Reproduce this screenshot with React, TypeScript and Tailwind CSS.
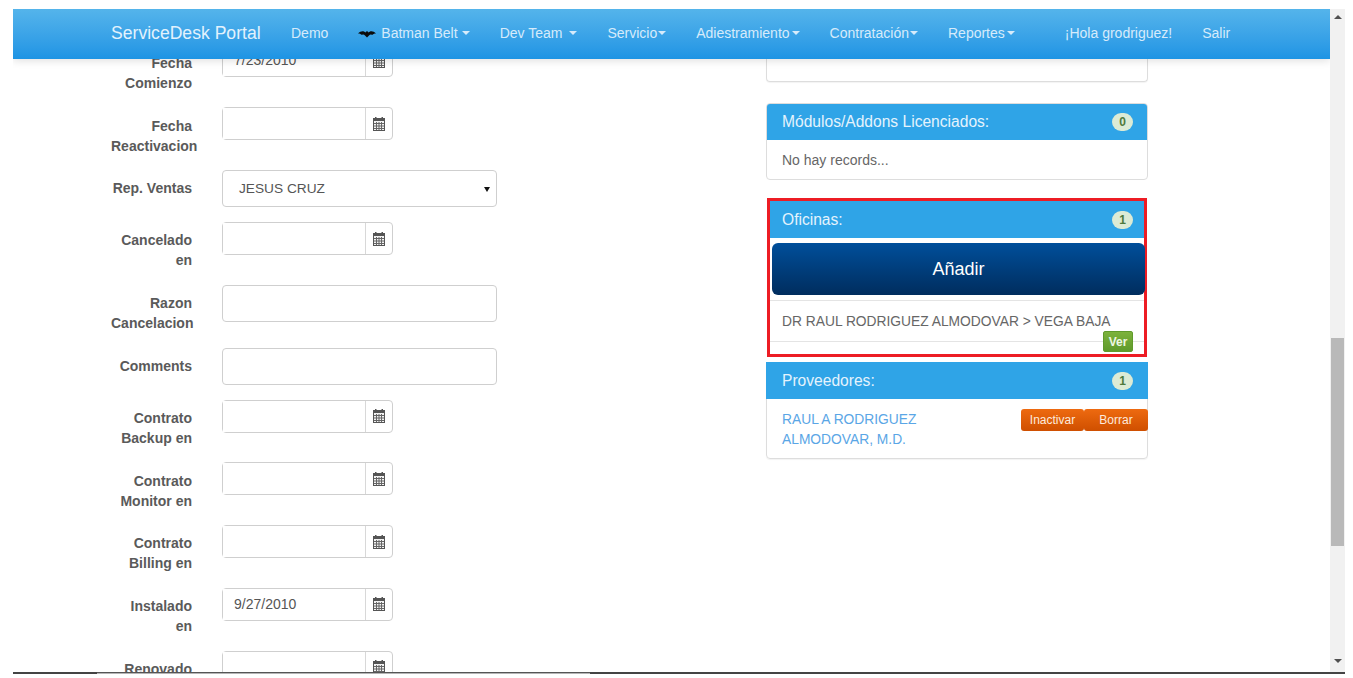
const navItems = [
  { label: "Demo" },
  { label: "Batman Belt", caretClass: "ml-[4px]", bat: true },
  { label: "Dev Team", caretClass: "ml-[7px]" },
  { label: "Servicio", caretClass: "ml-px" },
  { label: "Adiestramiento", caretClass: "ml-[2px]" },
  { label: "Contratación", caretClass: "ml-px" },
  { label: "Reportes", caretClass: "ml-[2px]" },
];

type Row =
  | { kind: "date"; lines: string[]; value?: string }
  | { kind: "text"; lines: string[] }
  | { kind: "select"; lines: string[]; value: string };

const rows: Row[] = [
  { kind: "date", lines: ["Fecha", "Comienzo"], value: "7/23/2010" },
  { kind: "date", lines: ["Fecha", "Reactivacion"] },
  { kind: "select", lines: ["Rep. Ventas"], value: "JESUS CRUZ" },
  { kind: "date", lines: ["Cancelado", "en"] },
  { kind: "text", lines: ["Razon", "Cancelacion"] },
  { kind: "text", lines: ["Comments"] },
  { kind: "date", lines: ["Contrato", "Backup en"] },
  { kind: "date", lines: ["Contrato", "Monitor en"] },
  { kind: "date", lines: ["Contrato", "Billing en"] },
  { kind: "date", lines: ["Instalado", "en"], value: "9/27/2010" },
  { kind: "date", lines: ["Renovado"] },
];

function Bat() {
  return (
    <svg width="18" height="9" viewBox="0 0 18 8" className="mr-[5px]">
      <path
        d="M0 4 C2 2 4 1.5 6 2 L7.6 3 L8.3 1.6 L9 2.4 L9.7 1.6 L10.4 3 L12 2 C14 1.5 16 2 18 4 C16 4 15 4.6 14 5.6 C13 4.8 12 5 11 6 L9 8 L7 6 C6 5 5 4.8 4 5.6 C3 4.6 2 4 0 4 Z"
        fill="#0b0b0b"
      />
    </svg>
  );
}

function CalendarIcon() {
  return (
    <svg width="12" height="14" viewBox="0 0 12 14">
      <rect x="0.5" y="1.5" width="11" height="12" fill="#f2f2f2" stroke="#555" />
      <rect x="0" y="1" width="12" height="3" fill="#555" />
      <rect x="2" y="0" width="1.5" height="2.5" fill="#555" />
      <rect x="8.5" y="0" width="1.5" height="2.5" fill="#555" />
      <path d="M1 6.5 H11 M1 9 H11 M1 11.5 H11 M3.5 5 V13 M6 5 V13 M8.5 5 V13" stroke="#666" strokeWidth="1" />
    </svg>
  );
}

function FormRow({ row }: { row: Row }) {
  return (
    <div className="mb-[15px] flex">
      <div className="mb-[-0.5px] w-[81px] flex-none pt-[8.3px] text-right text-[14px] leading-[20px] font-bold whitespace-nowrap text-[#5a5a5a]">
        {row.lines.map((l) => (
          <div key={l}>{l}</div>
        ))}
      </div>
      <div className="ml-[30px]">
        {row.kind === "date" && (
          <div className="flex h-[33px] w-[171px] rounded border border-[#cfcfcf]">
            <input
              readOnly
              defaultValue={row.value ?? ""}
              className="w-[142px] bg-white pl-[11px] text-[14px] text-[#555] outline-none"
            />
            <div className="flex flex-1 items-center justify-center border-l border-[#d8d8d8]">
              <CalendarIcon />
            </div>
          </div>
        )}
        {row.kind === "text" && (
          <input readOnly className="block h-[37px] w-[275px] rounded border border-[#cfcfcf] bg-white outline-none" />
        )}
        {row.kind === "select" && (
          <div className="flex h-[37px] w-[275px] items-center justify-between rounded border border-[#cfcfcf] pt-px pr-[6px] pl-[16px] text-[13.7px] text-[#555]">
            <span>{row.value}</span>
            <span className="h-0 w-0 border-x-[3px] border-t-[5px] border-x-transparent border-t-[#111]" />
          </div>
        )}
      </div>
    </div>
  );
}

function PanelHeader({ title, count, inset }: { title: string; count: string; inset?: boolean }) {
  return (
    <div
      className={`flex h-[37px] items-center justify-between bg-[#2fa4e7] text-[15.6px] text-[#e4f3fd] ${inset ? "pr-[11px] pl-[12px]" : "pr-[15px] pl-[16px]"}`}
    >
      <span>{title}</span>
      <span className="flex h-[18px] w-[21px] items-center justify-center rounded-full bg-[#dcebd5] text-[12px] font-bold text-[#4f7a3d]">
        {count}
      </span>
    </div>
  );
}

export default function App() {
  return (
    <div className="flex h-[678px] w-[1353px] flex-col overflow-hidden bg-white pt-[9px] pl-[13px] font-['Liberation_Sans',sans-serif]">
      <div className="flex h-[663px] w-[1332px] flex-none">
        <div className="flex w-[1317px] flex-none flex-col overflow-hidden">
          <nav className="relative z-10 flex h-[50px] flex-none items-center bg-gradient-to-b from-[#54b4eb] to-[#1d94e4] pb-[2px] pl-[98px] text-[14px] text-[#d6ebfb] shadow-[0_2px_8px_rgba(0,0,0,0.12)]">
            <span className="mr-[30px] w-[150px] text-[17.6px] whitespace-nowrap text-[#e2f2fd]">ServiceDesk Portal</span>
            <div className="flex items-center gap-[30px]">
              {navItems.map((n) => (
                <span key={n.label} className="flex items-center">
                  {n.bat && <Bat />}
                  {n.label}
                  {n.caretClass && (
                    <span
                      className={`${n.caretClass} inline-block h-0 w-0 border-x-[4px] border-t-[4px] border-x-transparent border-t-[#d6ebfb]`}
                    />
                  )}
                </span>
              ))}
            </div>
            <div className="ml-[50px] flex items-center gap-[30px]">
              <span>¡Hola grodriguez!</span>
              <span>Salir</span>
            </div>
          </nav>
          <div className="flex min-h-0 flex-1">
            <div className="mt-[-14.6px] ml-[98px] w-[655px] flex-none">
              {rows.map((r) => (
                <FormRow key={r.lines.join(" ")} row={r} />
              ))}
            </div>
            <div className="w-[382px] flex-none text-[14px] text-[#666]">
              <div className="h-[23px] rounded-b border border-t-0 border-[#dddddd] shadow-[0_1px_1px_rgba(0,0,0,0.05)]" />
              <div className="mt-[21px] h-[77px] overflow-hidden rounded border border-[#dddddd]">
                <div className="-mx-px -mt-px">
                  <PanelHeader title="Módulos/Addons Licenciados:" count="0" />
                </div>
                <div className="px-[15px] pt-[10px] leading-[20px]">No hay records...</div>
              </div>
              <div className="relative mx-px mt-[18px] h-[159px] border-[3px] border-[#ed1c24]">
                <PanelHeader title="Oficinas:" count="1" inset />
                <div className="mt-[5px] mr-[-1px] ml-[2px] flex h-[52px] items-center justify-center rounded-[6px] bg-gradient-to-b from-[#004f9b] to-[#002d5e] text-[18px] text-white">
                  Añadir
                </div>
                <div className="mt-[5px] flex h-[42px] items-center border-y border-[#e4e4e4] px-[12px] pt-[3px] text-[13.8px] text-[#666]">
                  DR RAUL RODRIGUEZ ALMODOVAR &gt; VEGA BAJA
                </div>
                <span className="absolute top-[130px] right-[11px] flex h-[21px] w-[30px] items-center justify-center rounded-[2px] border border-[#5f9a2b] bg-gradient-to-b from-[#7cb23c] to-[#5f9a2b] text-[12px] font-bold text-[#eef7e4]">
                  Ver
                </span>
              </div>
              <div className="mt-[5px] h-[97px] rounded border border-[#dddddd] shadow-[0_1px_1px_rgba(0,0,0,0.05)]">
                <div className="-mx-px -mt-px">
                  <PanelHeader title="Proveedores:" count="1" />
                </div>
                <div className="flex items-start justify-between pt-[10px] pl-[15px]">
                  <a className="mt-px w-[170px] text-[13.8px] leading-[20px] text-[#5aa6e6]">RAUL A RODRIGUEZ ALMODOVAR, M.D.</a>
                  <div className="-mr-px flex text-[12px] text-[#fdeadd]">
                    <span className="flex h-[22px] w-[63px] items-center justify-center rounded-[3px] bg-gradient-to-b from-[#ee6a10] to-[#cf4f00]">
                      Inactivar
                    </span>
                    <span className="flex h-[22px] w-[64px] items-center justify-center rounded-[3px] bg-gradient-to-b from-[#ee6a10] to-[#cf4f00]">
                      Borrar
                    </span>
                  </div>
                </div>
              </div>
            </div>
          </div>
        </div>
        <div className="flex w-[15px] flex-none flex-col items-center bg-[#f1f1f1] pt-[6px]">
          <span className="h-0 w-0 border-x-[4px] border-b-[4px] border-x-transparent border-b-[#505050]" />
          <div className="mt-[319px] h-[208px] w-[13px] flex-none bg-[#b9b9b9]" />
          <span className="mt-[113px] h-0 w-0 border-x-[4px] border-t-[4px] border-x-transparent border-t-[#505050]" />
        </div>
      </div>
      <div className="flex h-[2px] w-[1332px] flex-none">
        <div className="w-[84px] bg-[#444]" />
        <div className="w-[493px] border-t border-[#555] bg-[#b5b5b5]" />
        <div className="flex-1 bg-[#444]" />
      </div>
    </div>
  );
}
